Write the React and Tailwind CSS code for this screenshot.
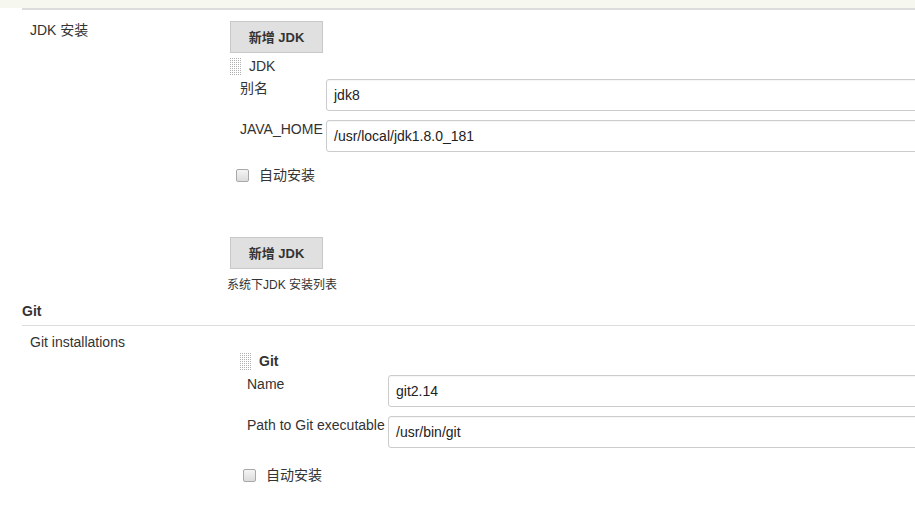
import React from 'react';

const Grip = () => (
  <svg width="11" height="17" viewBox="0 0 11 17" className="shrink-0">
    {[0, 1, 2, 3, 4, 5].map(c =>
      [0, 1, 2, 3, 4, 5, 6, 7, 8].map(r => (
        <rect key={`${c}-${r}`} x={c * 2} y={r * 2} width="1" height="1" fill="#b0b0b0" />
      ))
    )}
  </svg>
);

const AddButton = () => (
  <button className="h-[32px] w-[93px] border border-[#c8c8c8] bg-[#e0e0e0] text-[13px] font-bold text-[#333]">
    新增 JDK
  </button>
);

const Checkbox = ({ label }) => (
  <div className="flex h-[20px] items-center">
    <span className="h-[13px] w-[13px] shrink-0 rounded-[2px] border border-[#a8a8a8] bg-gradient-to-b from-[#f4f4f4] to-[#dcdcdc]" />
    <span className="ml-[10px]">{label}</span>
  </div>
);

const Field = ({ label, value, labelWidth, className = '' }) => (
  <div className={`flex ${className}`}>
    <div className="shrink-0 pt-[1px]" style={{ width: labelWidth }}>{label}</div>
    <div className="flex h-[32px] w-[700px] shrink-0 items-center rounded-[3px] border border-[#ccc] bg-white px-[7px] text-[14px] text-[#222] shadow-[inset_0_1px_1px_rgba(0,0,0,0.04)]">
      {value}
    </div>
  </div>
);

export default function App() {
  return (
    <div className="min-h-[527px] w-full overflow-hidden bg-white text-[14px] leading-[17px] text-[#333] font-['Liberation_Sans','Noto_Sans_CJK_SC',sans-serif]">
      <div className="h-[8px] bg-[#f6f8f0]" />
      <div className="ml-[22px] h-[2px] bg-[#dcdcdc]" />

      {/* JDK */}
      <div className="flex">
        <div className="w-[230px] shrink-0 pl-[30px] pt-[12px]">JDK 安装</div>
        <div className="min-w-0 flex-1 pt-[11px]">
          <AddButton />
          <div className="mt-[4px] flex h-[18px] items-center">
            <Grip />
            <span className="ml-[8px]">JDK</span>
          </div>
          <div className="pl-[10px]">
            <Field label="别名" value="jdk8" labelWidth={86} className="mt-[4px]" />
            <Field label="JAVA_HOME" value="/usr/local/jdk1.8.0_181" labelWidth={86} className="mt-[9px]" />
          </div>
          <div className="mt-[13px] pl-[6px]">
            <Checkbox label="自动安装" />
          </div>
          <div className="mt-[52px]">
            <AddButton />
          </div>
          <div className="-ml-[3px] mt-[9px] text-[12px] leading-[15px]">系统下JDK 安装列表</div>
        </div>
      </div>

      {/* Git */}
      <div className="mt-[10px] pl-[22px]">
        <div className="pb-[5px] font-bold">Git</div>
        <div className="h-[1px] bg-[#dcdcdc]" />
      </div>
      <div className="flex">
        <div className="w-[230px] shrink-0 pl-[30px] pt-[8px]">Git installations</div>
        <div className="min-w-0 flex-1 pl-[10px] pt-[26px]">
          <div className="flex h-[18px] items-center">
            <Grip />
            <span className="ml-[8px] font-bold">Git</span>
          </div>
          <div className="pl-[7px]">
            <Field label="Name" value="git2.14" labelWidth={141} className="mt-[5px]" />
            <Field label="Path to Git executable" value="/usr/bin/git" labelWidth={141} className="mt-[9px]" />
          </div>
          <div className="mt-[17px] pl-[3px]">
            <Checkbox label="自动安装" />
          </div>
        </div>
      </div>
    </div>
  );
}
